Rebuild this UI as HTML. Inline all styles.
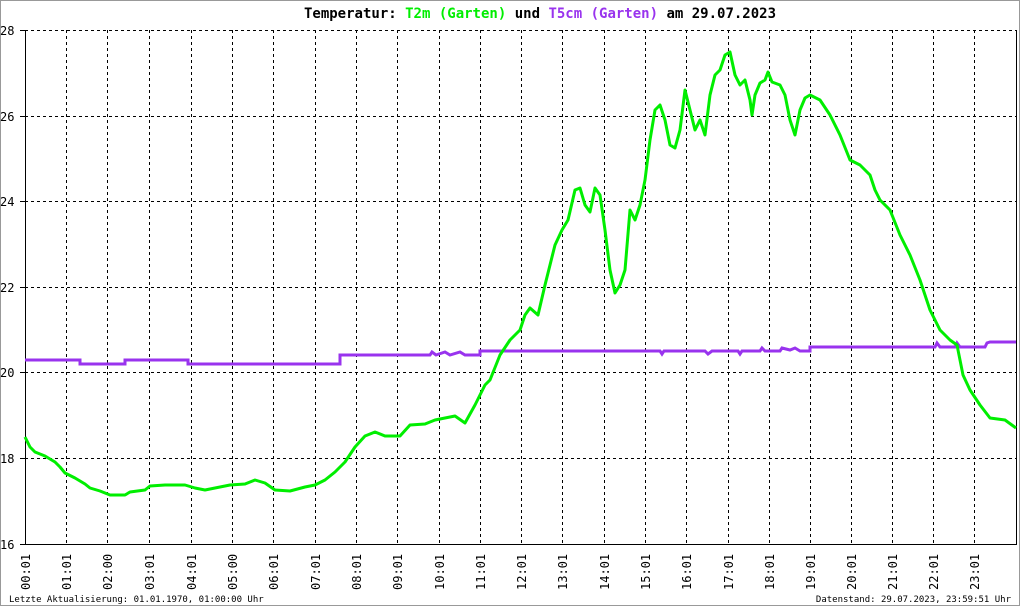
<!DOCTYPE html>
<html><head><meta charset="utf-8"><style>
html,body{margin:0;padding:0;background:#fff}
svg{display:block}
text{font-family:"DejaVu Sans Mono","Liberation Mono",monospace}
</style></head><body>
<svg width="1020" height="606" viewBox="0 0 1020 606" xmlns="http://www.w3.org/2000/svg">
<rect x="0.5" y="0.5" width="1019" height="605" fill="#fff" stroke="#999"/>
<g stroke="#000" stroke-width="1" stroke-dasharray="3,3" fill="none">
<path d="M25 30.5H1016 M25 116.5H1016 M25 201.5H1016 M25 287.5H1016 M25 372.5H1016 M25 458.5H1016"/>
<path d="M66.5 30V544 M107.5 30V544 M149.5 30V544 M191.5 30V544 M232.5 30V544 M273.5 30V544 M315.5 30V544 M356.5 30V544 M397.5 30V544 M439.5 30V544 M480.5 30V544 M521.5 30V544 M562.5 30V544 M604.5 30V544 M645.5 30V544 M686.5 30V544 M728.5 30V544 M769.5 30V544 M810.5 30V544 M851.5 30V544 M892.5 30V544 M933.5 30V544 M974.5 30V544"/>
</g>
<g stroke="#000" stroke-width="1" fill="none">
<path d="M25.5 30V544.5H1016.5V30"/>
<path d="M20 30.5H25 M20 116.5H25 M20 201.5H25 M20 287.5H25 M20 372.5H25 M20 458.5H25 M20 544.5H25"/>
</g>
<g font-size="12" fill="#000">
<text x="0" y="35">28</text><text x="0" y="121">26</text><text x="0" y="206">24</text>
<text x="0" y="292">22</text><text x="0" y="377">20</text><text x="0" y="463">18</text><text x="0" y="549">16</text>
</g>
<g font-size="12" fill="#000">
<text transform="translate(30,590) rotate(-90)">00:01</text>
<text transform="translate(71,590) rotate(-90)">01:01</text>
<text transform="translate(112,590) rotate(-90)">02:00</text>
<text transform="translate(154,590) rotate(-90)">03:01</text>
<text transform="translate(196,590) rotate(-90)">04:01</text>
<text transform="translate(237,590) rotate(-90)">05:00</text>
<text transform="translate(278,590) rotate(-90)">06:01</text>
<text transform="translate(320,590) rotate(-90)">07:01</text>
<text transform="translate(361,590) rotate(-90)">08:01</text>
<text transform="translate(402,590) rotate(-90)">09:01</text>
<text transform="translate(444,590) rotate(-90)">10:01</text>
<text transform="translate(485,590) rotate(-90)">11:01</text>
<text transform="translate(526,590) rotate(-90)">12:01</text>
<text transform="translate(567,590) rotate(-90)">13:01</text>
<text transform="translate(609,590) rotate(-90)">14:01</text>
<text transform="translate(650,590) rotate(-90)">15:01</text>
<text transform="translate(691,590) rotate(-90)">16:01</text>
<text transform="translate(733,590) rotate(-90)">17:01</text>
<text transform="translate(774,590) rotate(-90)">18:01</text>
<text transform="translate(815,590) rotate(-90)">19:01</text>
<text transform="translate(856,590) rotate(-90)">20:01</text>
<text transform="translate(897,590) rotate(-90)">21:01</text>
<text transform="translate(938,590) rotate(-90)">22:01</text>
<text transform="translate(979,590) rotate(-90)">23:01</text>
</g>
<text x="9" y="602" font-size="9" fill="#000">Letzte Aktualisierung: 01.01.1970, 01:00:00 Uhr</text>
<text x="1011" y="602" font-size="9" fill="#000" text-anchor="end">Datenstand: 29.07.2023, 23:59:51 Uhr</text>
<text x="540" y="18" font-size="14" font-weight="bold" text-anchor="middle" fill="#000">Temperatur: <tspan fill="#00ee00">T2m (Garten)</tspan> und <tspan fill="#9933ee">T5cm (Garten)</tspan> am 29.07.2023</text>
<polyline fill="none" stroke="#9933ee" stroke-width="3" points="25,360 80,360 80,364 125,364 125,360 188,360 188,364 340,364 340,355 430,355 432,352 436,355 445,352 450,355 460,352 465,355 480,355 480,351 660,351 662,354 664,351 705,351 708,354 712,351 738,351 740,354 742,351 760,351 762,348 765,351 780,351 782,348 790,350 795,348 800,351 810,351 810,347 935,347 937,343 940,347 955,347 957,343 960,347 985,347 987,343 990,342 1016,342"/>
<polyline fill="none" stroke="#00ee00" stroke-width="3" stroke-linejoin="round" points="25,437 30,447 35,452 45,456 55,462 60,467 65,473 75,478 85,484 90,488 100,491 110,495 125,495 130,492 145,490 150,486 165,485 185,485 195,488 205,490 215,488 230,485 245,484 255,480 265,483 275,490 290,491 305,487 315,485 325,480 335,472 345,462 355,447 365,436 375,432 385,436 400,436 410,425 425,424 435,420 445,418 455,416 465,423 475,405 485,385 490,380 500,355 510,340 520,330 525,315 530,308 538,315 545,285 555,245 562,230 568,220 575,190 580,188 585,205 590,212 595,188 600,195 605,230 610,270 615,293 620,285 625,270 630,210 635,220 640,205 645,180 650,140 655,110 660,105 665,120 670,145 675,148 680,130 685,90 690,110 695,130 700,120 705,135 710,95 715,75 720,70 725,55 730,52 735,75 740,85 745,80 750,100 752,115 755,95 760,83 765,80 768,72 772,82 780,85 785,95 790,120 795,135 800,110 805,98 810,95 820,100 830,115 840,135 850,160 860,165 870,175 875,190 880,200 890,210 900,235 910,255 920,280 930,310 940,330 950,340 957,345 963,375 970,390 980,405 990,418 1005,420 1016,428"/>
</svg>
</body></html>
